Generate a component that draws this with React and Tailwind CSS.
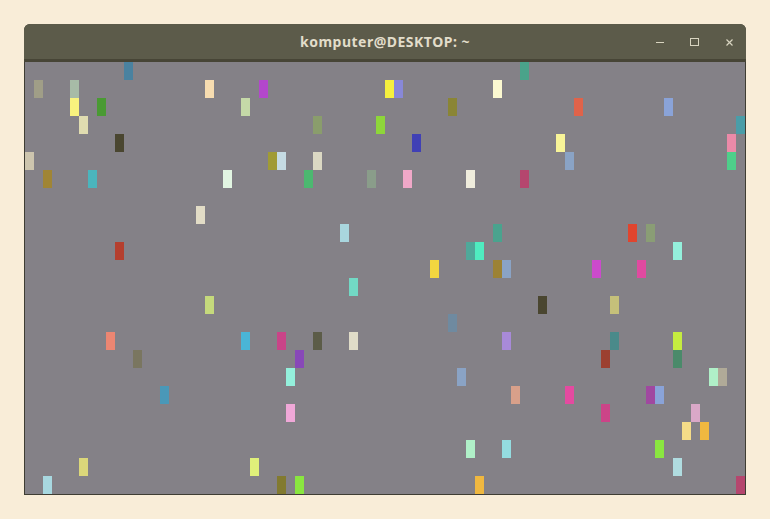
import React from "react";

const cells = [
  [0, 11, "#4a82a0"], [0, 55, "#4aa38a"],
  [1, 1, "#a09e87"], [1, 5, "#a7bba7"], [1, 20, "#f6dcb0"], [1, 26, "#b347cc"], [1, 40, "#f5f03f"], [1, 41, "#8888d8"], [1, 52, "#fbf8d0"],
  [2, 5, "#f8f27e"], [2, 8, "#4a9a33"], [2, 24, "#c5d9a8"], [2, 47, "#8a8535"], [2, 61, "#e0634a"], [2, 71, "#8aa3d8"],
  [3, 6, "#e0dcb0"], [3, 32, "#8a9d6c"], [3, 39, "#8ed63a"], [3, 79, "#4a9da8"],
  [4, 10, "#4a4630"], [4, 43, "#4040b5"], [4, 59, "#f8f498"], [4, 78, "#eb8aa8"],
  [5, 0, "#cdc5ae"], [5, 27, "#a09b35"], [5, 28, "#c5dbe3"], [5, 32, "#dbd8c3"], [5, 60, "#8aa3c5"], [5, 78, "#4ecf8a"],
  [6, 2, "#a08535"], [6, 7, "#4ab5bd"], [6, 22, "#e2f5e2"], [6, 31, "#4cb870"], [6, 38, "#8a9d8a"], [6, 42, "#f0a8c8"], [6, 49, "#efecdc"], [6, 55, "#b5466e"],
  [8, 19, "#e2dcc6"],
  [9, 35, "#a9d6de"], [9, 52, "#4aa38e"], [9, 67, "#e0452e"], [9, 69, "#8a9d75"],
  [10, 10, "#b53f2e"], [10, 49, "#4fa89a"], [10, 50, "#4fecc0"], [10, 72, "#94f0dc"],
  [11, 45, "#f2d640"], [11, 52, "#9c8235"], [11, 53, "#8aa3c5"], [11, 63, "#cc4acc"], [11, 68, "#e04aa0"],
  [12, 36, "#72d9c5"],
  [13, 20, "#c5d97c"], [13, 57, "#4a4630"], [13, 65, "#c5c07a"],
  [14, 47, "#6f8aa0"],
  [15, 9, "#ec8672"], [15, 24, "#4ab5d6"], [15, 28, "#c94488"], [15, 32, "#5c5c48"], [15, 36, "#e0dcc8"], [15, 53, "#a88ad8"], [15, 65, "#4a8a8a"], [15, 72, "#c5ec40"],
  [16, 12, "#7a7660"], [16, 30, "#8848b8"], [16, 64, "#9c4030"], [16, 72, "#4a8a6a"],
  [17, 29, "#94f0dc"], [17, 48, "#8aa3c5"], [17, 76, "#b0f0c8"], [17, 77, "#b0aa98"],
  [18, 15, "#4a98b8"], [18, 54, "#d8a08a"], [18, 60, "#e44aa0"], [18, 69, "#a048a0"], [18, 70, "#8aa3d8"],
  [19, 29, "#f0a8d8"], [19, 64, "#cc4488"], [19, 74, "#daa8c8"],
  [20, 73, "#f5dc88"], [20, 75, "#f0b840"],
  [21, 49, "#b0f0c8"], [21, 53, "#94dce0"], [21, 70, "#8ae640"],
  [22, 6, "#dbd77a"], [22, 25, "#e0f07a"], [22, 72, "#b0dce0"],
  [23, 2, "#a8d8e0"], [23, 28, "#827a30"], [23, 30, "#8ae640"], [23, 50, "#f0b840"], [23, 79, "#b5466e"],
];

export default function App() {
  return (
    <div className="w-[770px] h-[519px] bg-[#f9edd8] pt-[24px] pl-[24px]">
      <div className="w-[722px] flex flex-col rounded-t-[6px] overflow-hidden bg-[#3f3d33]">
        <div className="h-[35px] bg-[#5c5b4a] flex items-center relative">
          <div className="flex-1 text-center text-[14px] tracking-[0.5px] font-bold text-[#e2ddca] font-['Noto_Sans',sans-serif] leading-none pt-[1px]">
            komputer@DESKTOP: ~
          </div>
          <div className="absolute right-[12px] top-0 h-[35px] flex items-center gap-[26px]">
            <div className="w-[8px] h-[1px] bg-[#d8d4c0] mt-[2px]" />
            <div className="w-[9px] h-[8px] border border-[#d8d4c0] mt-[1px]" />
            <svg width="9" height="9" viewBox="0 0 9 9" className="mt-[1px]">
              <path d="M1.5 1.5 L7.5 7.5 M7.5 1.5 L1.5 7.5" stroke="#d8d4c0" strokeWidth="1.2" />
            </svg>
          </div>
        </div>
        <div className="h-[3px] bg-[#474536]" />
        <div className="px-[1px] pb-[1px]">
          <div className="w-[720px] h-[432px] bg-[#848187] grid grid-cols-[repeat(80,9px)] grid-rows-[repeat(24,18px)]">
            {cells.map(([r, c, color], i) => (
              <div
                key={i}
                style={{ gridRow: r + 1, gridColumn: c + 1, backgroundColor: color }}
              />
            ))}
          </div>
        </div>
      </div>
    </div>
  );
}
